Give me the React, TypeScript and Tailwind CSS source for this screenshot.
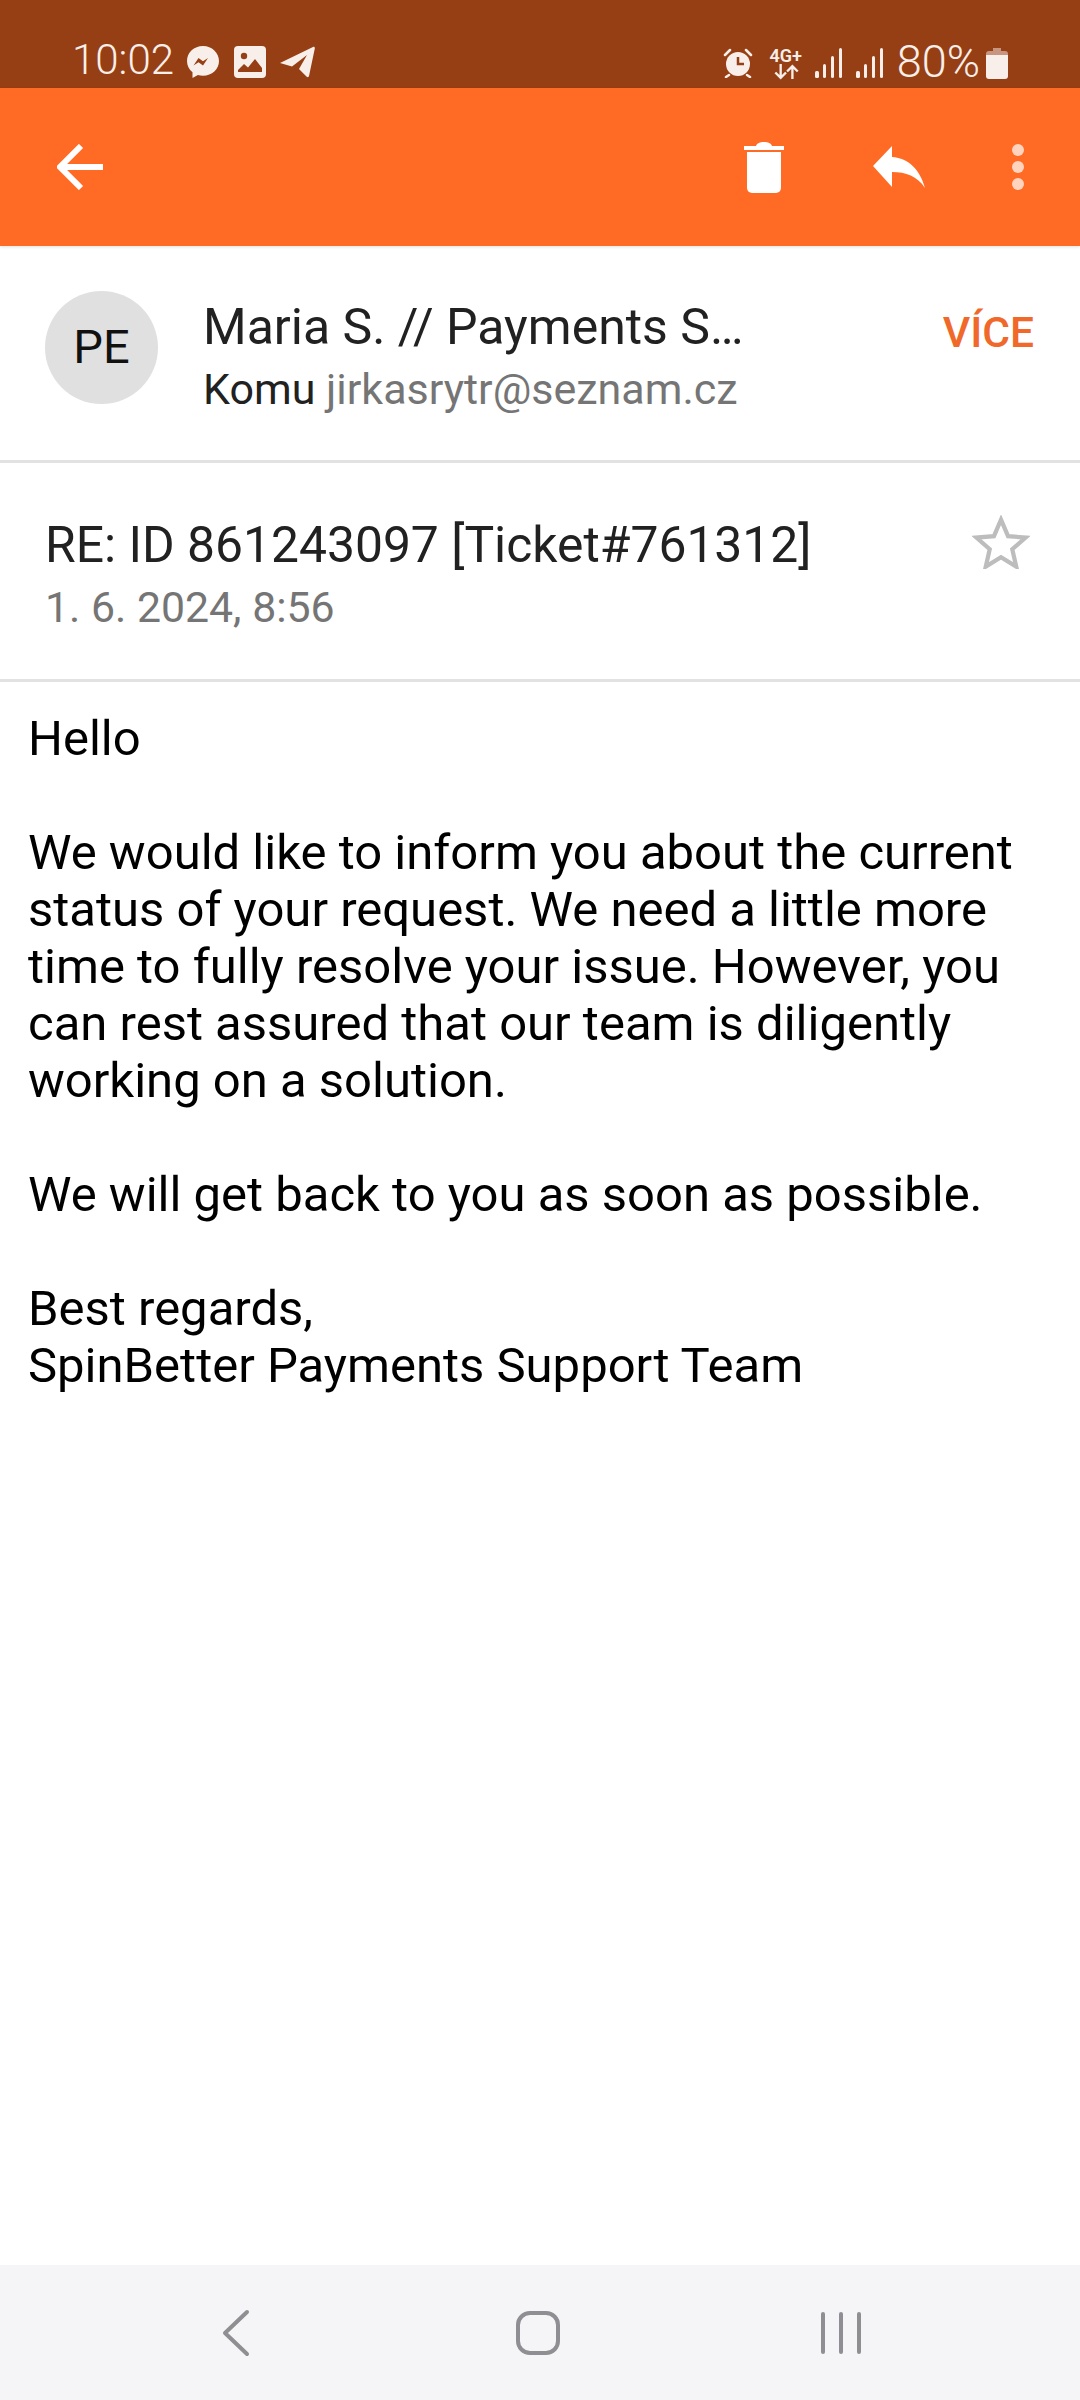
import React from 'react';

const BODY = [
  ['Hello'],
  [
    'We would like to inform you about the current',
    'status of your request. We need a little more',
    'time to fully resolve your issue. However, you',
    'can rest assured that our team is diligently',
    'working on a solution.',
  ],
  ['We will get back to you as soon as possible.'],
  ['Best regards,', 'SpinBetter Payments Support Team'],
];

function StatusLeft() {
  return (
    <div className="flex items-center">
      <span className="text-[42px] leading-none font-light w-[114px] mt-[-3px] ml-[-1px]">10:02</span>
      <svg width="34" height="34" viewBox="0 0 34 34">
        <path fill="#f8efea" d="M17 1C8 1 1 7.600 1 16c0 4.600 2 8.500 5.500 11.300V33l5.400-3c1.600.500 3.300.700 5.100.700 9 0 16-6.500 16-14.700S26 1 17 1z" />
        <path fill="#973f14" d="M7.500 20.500l5-7.600 4.500 3.400 5-3.400-5 7.700-4.500-3.400z" />
      </svg>
      <svg width="32" height="32" viewBox="0 0 32 32" className="ml-[14px]">
        <rect width="32" height="32" rx="4" fill="#f8efea" />
        <circle cx="10" cy="10" r="3.200" fill="#973f14" />
        <path fill="#973f14" d="M4 26v-2l6-6 4 3.500L21 13l7 9v4z" />
      </svg>
      <svg width="36" height="32" viewBox="0 0 36 32" className="ml-[13px]">
        <path fill="#f8efea" d="M1 17L34 1c1-.500 2 .300 1.800 1.400L30 30c-.300 1.200-1.500 1.500-2.300.700L20 23l8-14-15 11.500z" />
      </svg>
    </div>
  );
}

function StatusRight() {
  return (
    <div className="flex items-center">
      <svg width="30" height="30" viewBox="0 0 30 30">
        <circle cx="15" cy="16" r="12" fill="#f8efea" />
        <path d="M15 9v7h6" fill="none" stroke="#973f14" strokeWidth="2.500" />
        <path d="M2 7l5-5M28 7l-5-5M6 27l-3 2M24 27l3 2" stroke="#f8efea" strokeWidth="2.500" strokeLinecap="round" />
      </svg>
      <div className="ml-[16px] w-[34px] flex flex-col items-center leading-none">
        <span className="text-[18px] font-semibold leading-[17px] whitespace-nowrap">4G+</span>
        <svg width="26" height="16" viewBox="0 0 24 15">
          <path d="M7 0v13M2 8l5 5 5-5M18 14V2M13 7l5-5 5 5" fill="none" stroke="#f8efea" strokeWidth="2.200" />
        </svg>
      </div>
      <Signal className="ml-[12px]" />
      <Signal className="ml-[14px]" />
      <span className="ml-[14px] text-[45px] leading-none font-light mt-[-3px]">80%</span>
      <svg width="22" height="31" viewBox="0 0 22 31" className="ml-[6px]">
        <path fill="#c89680" d="M7 0h8v3h4a3 3 0 0 1 3 3v4H0V6a3 3 0 0 1 3-3h4z" />
        <path fill="#f8efea" d="M0 7h22v21a3 3 0 0 1-3 3H3a3 3 0 0 1-3-3z" />
      </svg>
    </div>
  );
}

function Signal({ className }: { className: string }) {
  return (
    <svg width="27" height="30" viewBox="0 0 27 30" className={className}>
      <g fill="#f8efea">
        <rect x="0" y="23" width="4" height="7" rx="1.500" />
        <rect x="8" y="16" width="3" height="14" rx="1.500" />
        <rect x="16" y="8" width="3" height="22" rx="1.500" />
        <rect x="24" y="0" width="3" height="30" rx="1.500" />
      </g>
    </svg>
  );
}

export default function App() {
  return (
    <div className="w-[1080px] h-[2400px] flex flex-col bg-white overflow-hidden" style={{ fontFamily: "Roboto, sans-serif" }}>
      {/* status bar */}
      <div className="h-[88px] bg-[#973f14] text-[#f8efea] flex items-start justify-between pt-[42px] pl-[73px] pr-[72px] flex-shrink-0">
        <StatusLeft />
        <StatusRight />
      </div>

      {/* toolbar */}
      <div className="h-[158px] bg-[#ff6b24] flex items-center pl-[57px] pr-[56px] flex-shrink-0 shadow-[0_1px_3px_rgba(0,0,0,0.12)]">
        <svg width="46" height="46" viewBox="0 0 46 46" fill="none" stroke="#fff" strokeWidth="6">
          <path d="M46 23H4M24 2L3 23l21 21" />
        </svg>
        <div className="flex-1" />
        <svg width="40" height="52" viewBox="0 0 40 52" fill="#fff">
          <path d="M0 5h12c1-3 4-4 8-4s7 1 8 4h12v4H0z" />
          <path d="M3 11h34v36a5 5 0 0 1-5 5H8a5 5 0 0 1-5-5z" />
        </svg>
        <svg width="52" height="42" viewBox="0 0 52 42" fill="#fff" className="ml-[89px]">
          <path d="M0 20L19 0v11c17 1 28 13 33 31C44 30 33 26 19 26v15z" />
        </svg>
        <div className="ml-[87px] flex flex-col gap-[5px]">
          <div className="w-[12px] h-[12px] rounded-full bg-[#ffd3bd]" />
          <div className="w-[12px] h-[12px] rounded-full bg-[#ffd3bd]" />
          <div className="w-[12px] h-[12px] rounded-full bg-[#ffd3bd]" />
        </div>
      </div>

      {/* sender */}
      <div className="h-[217px] flex items-start pl-[45px] pr-[46px] border-b-[3px] border-[#e2e2e2] flex-shrink-0">
        <div className="mt-[45px] w-[113px] h-[113px] rounded-full bg-[#e0e0e0] flex items-center justify-center text-[47px] text-[#111111] flex-shrink-0">
          PE
        </div>
        <div className="ml-[45px] flex-1 pt-[50px]">
          <div className="text-[50px] leading-[62px] text-[#212121] whitespace-nowrap">Maria S. // Payments S…</div>
          <div className="text-[43px] leading-[50px] mt-[6px] whitespace-nowrap text-[#212121]">
            Komu <span className="text-[#757575]">jirkasrytr@seznam.cz</span>
          </div>
        </div>
        <div className="mt-[62px] text-[42.500px] leading-[50px] font-medium text-[#f0682a]">VÍCE</div>
      </div>

      {/* subject */}
      <div className="h-[219px] flex items-start pl-[45px] pr-[50px] border-b-[3px] border-[#e2e2e2] flex-shrink-0">
        <div className="flex-1 pt-[51px]">
          <div className="text-[49.800px] leading-[62px] text-[#212121] whitespace-nowrap">RE: ID 861243097 [Ticket#761312]</div>
          <div className="text-[42.800px] leading-[50px] mt-[6px] text-[#757575] whitespace-nowrap">1. 6. 2024, 8:56</div>
        </div>
        <svg width="58" height="54" viewBox="0 0 24 23" fill="none" stroke="#bdbdbd" strokeWidth="1.800" className="mt-[52px]">
          <path d="M12 2l3 7 7.500.6-5.700 5 1.700 7.400L12 18l-6.500 4 1.700-7.400-5.700-5L9 9z" />
        </svg>
      </div>

      {/* body */}
      <div className="flex-1 pt-[28px] pl-[28px] flex flex-col gap-[57px] text-[49px] leading-[57px] text-black">
        {BODY.map((para, i) => (
          <div key={i}>
            {para.map(line => (
              <div key={line} className="whitespace-nowrap">{line}</div>
            ))}
          </div>
        ))}
      </div>

      {/* nav bar */}
      <div className="h-[135px] bg-[#f5f5f8] flex items-center flex-shrink-0 pl-[221px]">
        <svg width="30" height="48" viewBox="0 0 30 48" fill="none" stroke="#8f8f93" strokeWidth="4" strokeLinecap="round" strokeLinejoin="round">
          <path d="M26 3L4 24l22 21" />
        </svg>
        <svg width="46" height="46" viewBox="0 0 46 46" fill="none" stroke="#8f8f93" strokeWidth="4" className="ml-[264px]">
          <rect x="3" y="3" width="40" height="40" rx="12" />
        </svg>
        <div className="ml-[260px] flex gap-[14px]">
          <div className="w-[4px] h-[42px] rounded-sm bg-[#8f8f93]" />
          <div className="w-[4px] h-[42px] rounded-sm bg-[#8f8f93]" />
          <div className="w-[4px] h-[42px] rounded-sm bg-[#8f8f93]" />
        </div>
      </div>
    </div>
  );
}
